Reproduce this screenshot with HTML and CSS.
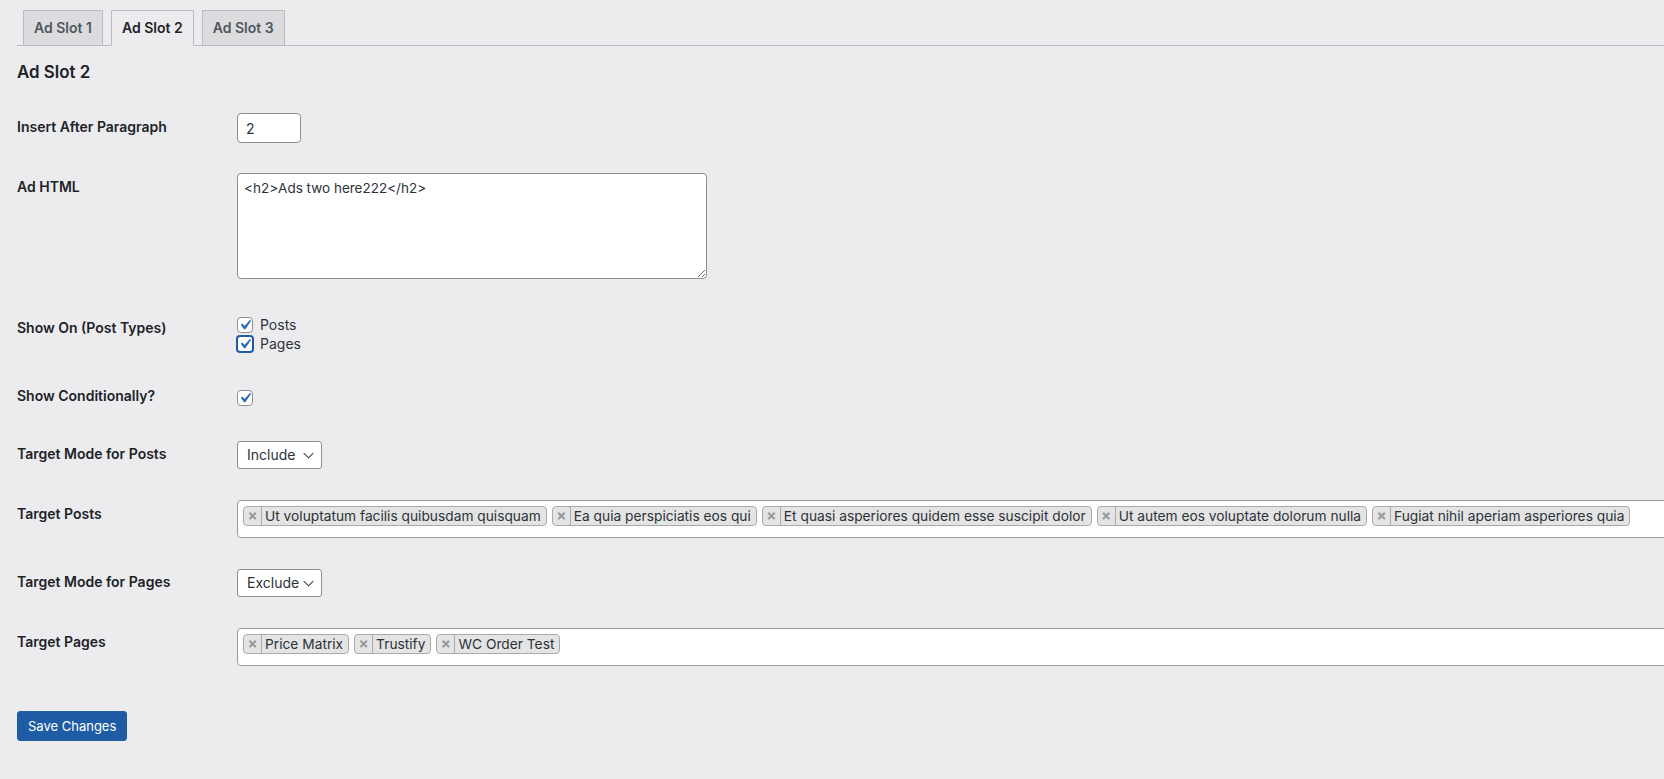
FILE: index.html
```html
<!DOCTYPE html>
<html lang="en">
<head>
<meta charset="utf-8">
<title>Ad Slots</title>
<link rel="stylesheet" href="styles.css">
</head>
<body>
<div class="wrap">
  <nav class="tabs">
    <a class="tab" href="#">Ad Slot 1</a>
    <a class="tab active" href="#">Ad Slot 2</a>
    <a class="tab" href="#">Ad Slot 3</a>
  </nav>

  <h2 class="slot-title">Ad Slot 2</h2>

  <table class="form-table">
    <tr class="row-input">
      <th>Insert After Paragraph</th>
      <td><input class="num-input" type="text" value="2"></td>
    </tr>
    <tr class="row-textarea">
      <th>Ad HTML</th>
      <td><textarea class="code-area">&lt;h2&gt;Ads two here222&lt;/h2&gt;</textarea></td>
    </tr>
    <tr class="row-checks">
      <th>Show On (Post Types)</th>
      <td>
        <label class="check-line"><span class="cb"><svg viewBox="0 0 20 20"><path d="M14.83 4.89l1.34.94-5.81 8.38H9.02L5.78 9.67l1.34-1.25 2.57 2.4z"/></svg></span>Posts</label>
        <label class="check-line"><span class="cb focus"><svg viewBox="0 0 20 20"><path d="M14.83 4.89l1.34.94-5.81 8.38H9.02L5.78 9.67l1.34-1.25 2.57 2.4z"/></svg></span>Pages</label>
      </td>
    </tr>
    <tr class="row-single">
      <th>Show Conditionally?</th>
      <td><span class="cb"><svg viewBox="0 0 20 20"><path d="M14.83 4.89l1.34.94-5.81 8.38H9.02L5.78 9.67l1.34-1.25 2.57 2.4z"/></svg></span></td>
    </tr>
    <tr class="row-select">
      <th>Target Mode for Posts</th>
      <td><div class="select"><span>Include</span><svg class="chev" viewBox="0 0 12 7"><path d="M0.8 0.8L6 6L11.2 0.8"/></svg></div></td>
    </tr>
    <tr class="row-multi">
      <th>Target Posts</th>
      <td>
        <div class="multi">
          <span class="choice"><span class="remove">×</span><span class="choice-text">Ut voluptatum facilis quibusdam quisquam</span></span>
          <span class="choice"><span class="remove">×</span><span class="choice-text">Ea quia perspiciatis eos qui</span></span>
          <span class="choice"><span class="remove">×</span><span class="choice-text">Et quasi asperiores quidem esse suscipit dolor</span></span>
          <span class="choice"><span class="remove">×</span><span class="choice-text">Ut autem eos voluptate dolorum nulla</span></span>
          <span class="choice"><span class="remove">×</span><span class="choice-text">Fugiat nihil aperiam asperiores quia</span></span>
        </div>
      </td>
    </tr>
    <tr class="row-select">
      <th>Target Mode for Pages</th>
      <td><div class="select"><span>Exclude</span><svg class="chev" viewBox="0 0 12 7"><path d="M0.8 0.8L6 6L11.2 0.8"/></svg></div></td>
    </tr>
    <tr class="row-multi">
      <th>Target Pages</th>
      <td>
        <div class="multi">
          <span class="choice"><span class="remove">×</span><span class="choice-text">Price Matrix</span></span>
          <span class="choice"><span class="remove">×</span><span class="choice-text">Trustify</span></span>
          <span class="choice"><span class="remove">×</span><span class="choice-text">WC Order Test</span></span>
        </div>
      </td>
    </tr>
  </table>

  <p class="submit"><button class="btn-primary" type="button">Save Changes</button></p>
</div>
</body>
</html>
```

FILE: styles.css
```css
html, body {
  margin: 0;
  padding: 0;
  background: #ececef;
  overflow: hidden;
}

body {
  font-family: Inter, "Noto Sans", sans-serif;
  font-size: 13px;
  line-height: 1.4;
  color: #2c3338;
}

.wrap {
  padding-left: 17px;
}

/* tabs */
.tabs {
  display: flex;
  align-items: flex-end;
  padding-top: 10px;
  border-bottom: 1px solid #bcbcc0;
}

.tab {
  margin-left: 6px;
  padding: 5px 10px;
  border: 1px solid #bcbcc0;
  border-bottom: none;
  background: #dcdcde;
  color: #50575e;
  font-size: 14px;
  line-height: 24px;
  font-weight: 600;
  text-decoration: none;
}

.tab + .tab {
  margin-left: 8px;
}

.tab.active {
  background: #ececef;
  color: #1d2327;
  border-bottom: 1px solid #ececef;
  margin-bottom: -1px;
}

.slot-title {
  font-size: 16.9px;
  font-weight: 600;
  color: #1d2327;
  line-height: 20px;
  margin: 16px 0 16px;
}

/* form table */
.form-table {
  border-collapse: collapse;
  width: 1700px;
}

.form-table th {
  width: 200px;
  padding: 20px 10px 20px 0;
  text-align: left;
  vertical-align: top;
  font-size: 14px;
  line-height: 18px;
  font-weight: 600;
  color: #1d2327;
}

.form-table td {
  padding: 15px 10px;
  vertical-align: middle;
  font-size: 14px;
  line-height: 18px;
  color: #2c3338;
}

.num-input {
  display: block;
  box-sizing: border-box;
  width: 64px;
  height: 30px;
  padding: 0 8px;
  margin: 0;
  border: 1px solid #8c8f94;
  border-radius: 4px;
  background: #fff;
  font-family: Inter, "Noto Sans", sans-serif;
  font-size: 14px;
  color: #2c3338;
}

.code-area {
  display: block;
  box-sizing: border-box;
  width: 470px;
  height: 106px;
  margin: 0 0 5px;
  padding: 4px 6px;
  border: 1px solid #8c8f94;
  border-radius: 4px;
  background: #fff;
  font-family: Inter, "Noto Sans", sans-serif;
  font-size: 13.5px;
  line-height: 20px;
  color: #2c3338;
  resize: both;
}

/* checkboxes */
.row-checks td {
  padding-top: 16px;
  padding-bottom: 14px;
}

.check-line {
  display: flex;
  align-items: center;
  gap: 7px;
  height: 19px;
}

.cb {
  display: inline-flex;
  align-items: center;
  justify-content: center;
  box-sizing: border-box;
  width: 16px;
  height: 16px;
  border: 1px solid #8c8f94;
  border-radius: 4px;
  background: #fff;
  flex: none;
  vertical-align: middle;
}

.cb svg {
  width: 20px;
  height: 20px;
  fill: #2f6fb8;
  flex: none;
}

.cb.focus {
  border: 2px solid #1f5ca6;
  width: 18px;
  height: 18px;
  margin-left: -1px;
  margin-right: -1px;
}

.row-single td {
  padding-top: 19px;
}

.row-single .cb {
  display: flex;
}

/* select */
.select {
  display: inline-flex;
  align-items: center;
  justify-content: space-between;
  box-sizing: border-box;
  width: 85px;
  height: 28px;
  padding: 0 7px 0 9px;
  border: 1px solid #8c8f94;
  border-radius: 3px;
  background: #fff;
  font-size: 14px;
  color: #2c3338;
  vertical-align: middle;
}

.chev {
  width: 11px;
  height: 7px;
  fill: none;
  stroke: #3c434a;
  stroke-width: 1.2;
}

.row-select td {
  padding-top: 16px;
  padding-bottom: 16px;
}

/* select2-like multi */
.multi {
  display: flex;
  flex-wrap: wrap;
  align-items: flex-start;
  box-sizing: border-box;
  min-height: 38px;
  padding: 0 5px 5px 0;
  border: 1px solid #9a9a9e;
  border-radius: 4px;
  background: #fff;
}

.choice {
  display: inline-flex;
  align-items: stretch;
  box-sizing: border-box;
  height: 20px;
  margin: 5px 0 0 5px;
  border: 1px solid #aaa;
  border-radius: 4px;
  background: #e4e4e4;
  font-size: 13.75px;
  line-height: 18px;
  color: #2c3338;
  white-space: nowrap;
}

.remove {
  display: flex;
  align-items: center;
  justify-content: center;
  width: 17px;
  border-right: 1px solid #aaa;
  color: #999;
  font-weight: 700;
  font-size: 15px;
}

.choice-text {
  padding: 0 5px 0 3px;
}

/* submit */
.submit {
  margin: 30px 0 0;
}

.btn-primary {
  box-sizing: border-box;
  height: 30px;
  padding: 0 10px;
  border: 1px solid #1f5ca6;
  border-radius: 3px;
  background: #1f5ca6;
  color: #fff;
  font-family: Inter, "Noto Sans", sans-serif;
  font-size: 13px;
  font-weight: 400;
  cursor: pointer;
}
```
